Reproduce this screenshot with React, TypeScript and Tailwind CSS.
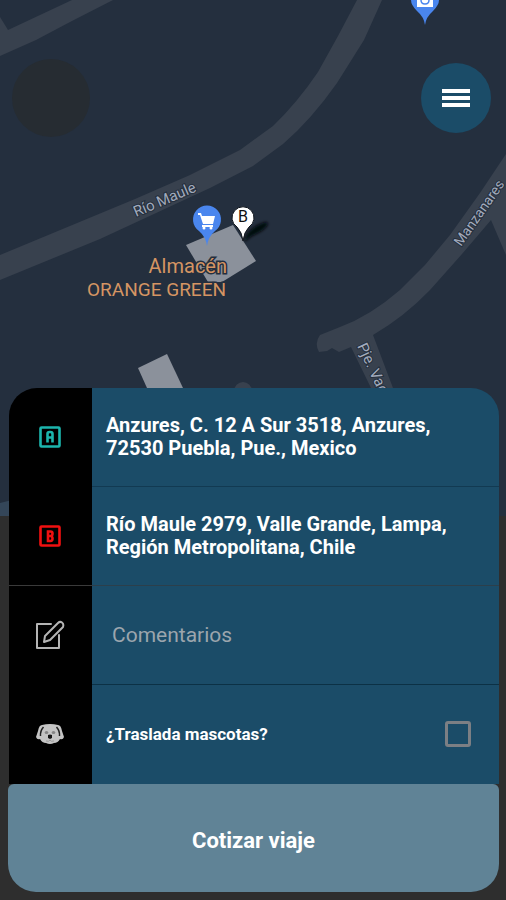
import type { ReactNode } from 'react';

function MapBackground() {
  return (
    <svg
      className="absolute left-0 top-0 h-[516px] w-full"
      viewBox="0 0 506 516"
      preserveAspectRatio="xMidYMin slice"
      fontFamily="Roboto, sans-serif"
      aria-hidden="true"
    >
      <defs>
        <filter id="soft" x="-30%" y="-30%" width="160%" height="160%">
          <feGaussianBlur stdDeviation="1.5" />
        </filter>
      </defs>
      <rect width="506" height="516" fill="#242f3e" />
      <g fill="#38414e">
        <path d="M0 17 8 30 72 0h41L70 22 36 40 0 56z" />
        <path d="M0 255 135 199 190 175 240 150 273 126Q297 103 318 72L338 36 357 0h25l-18 40-27 43q-26 37-54 61l-30 22-43 22L100 239 0 280z" />
        <path d="M506 154 480 193 450 235 425 265 400 290Q370 316 340 327L320 335Q314 343 319 352l8-1 5-3 7 4 12-5 20 41h22L373 335q31-18 57-45l32-36 29-34 15 35z" />
        <circle cx="243" cy="391" r="9" />
      </g>
      <g fill="#8b919b">
        <path d="m186 245 47-20 23 36-34 21h-14z" />
        <path d="m138 368 29-14 16 34h-36z" />
      </g>
      <path d="M0 503 12 500v16H0z" fill="#344659" />

      <g fill="#a2aabb" stroke="#242f3e" strokeWidth="2" paintOrder="stroke">
        <text fontSize="15" transform="translate(136 217) rotate(-23)">Río Maule</text>
        <text fontSize="14" transform="translate(461 247) rotate(-55)">Manzanares</text>
        <text fontSize="15" transform="translate(357 346) rotate(65)">Pje. Vac</text>
      </g>
      <g fontSize="20" fill="#d59563" stroke="#242f3e" strokeWidth="3" paintOrder="stroke" textAnchor="end">
        <text x="227" y="273">Almacén</text>
        <text x="226" y="296" fontSize="19">ORANGE GREEN</text>
      </g>

      <path d="M244 242q2-12 16-18 8-4 8 0-2 6-16 12z" fill="#05080c" filter="url(#soft)" />
      <path d="M207 246q-1-9-8-15a14 14 0 1 1 16 0q-7 6-8 15z" fill="#4a86ee" />
      <path d="M198 213h3l1 3h13l-2 8h-10l-3-9h-2zM202 225h11v2h-11z" fill="#fff" />
      <circle cx="204" cy="228" r="1.5" fill="#fff" />
      <circle cx="211" cy="228" r="1.5" fill="#fff" />
      <path d="M243 241q-1-9-6-14a11 11 0 1 1 12 0q-5 5-6 14z" fill="#fff" stroke="#10151c" />
      <text x="243" y="222" fontSize="16" textAnchor="middle" fill="#111">B</text>

      <path d="M425 25q-1-8-8-14-6-6-6-11h28q0 5-6 11-7 6-8 14z" fill="#4a86ee" />
      <path d="M417 0h16v7h-16z" fill="#fff" />
      <path d="M421 0q0 4 4 4t4-4" fill="none" stroke="#4a86ee" strokeWidth="1.5" />
    </svg>
  );
}

function LetterIcon({ letter, className }: { letter: 'A' | 'B'; className: string }) {
  return (
    <svg viewBox="0 0 24 24" className={`size-6 ${className}`} fill="none" stroke="currentColor" aria-hidden="true">
      <rect x="2.5" y="2.5" width="19" height="19" rx="1" strokeWidth="2.6" />
      {letter === 'A' ? (
        <path d="M9.500 17.500V9q0-2 2-2h1q2 0 2 2v8.500M9.500 12.500h5" strokeWidth="2.6" />
      ) : (
        <path d="M10 7.500h2.500q2 0 2 2 0 2.500-2 2.500H10h2.500q2 0 2 2.500t-2 2.500H10z" strokeWidth="2.6" />
      )}
    </svg>
  );
}

function EditIcon() {
  return (
    <svg viewBox="0 0 30 30" className="size-[30px] text-[#b4b4b4]" fill="none" stroke="currentColor" strokeWidth="2" strokeLinejoin="round" strokeLinecap="round" aria-hidden="true">
      <path d="M16 4H2v24h22V15" />
      <path d="m9 22 1-6L23 3q2-2 4-.5T28 7L15 20z" />
    </svg>
  );
}

function DogIcon() {
  return (
    <svg viewBox="0 0 28 22" className="h-[22px] w-7" aria-hidden="true">
      <path d="M6 2Q14 0 22 2q3 0 4 6l2 6q-1 3-4 2-2 4-6 4-4 2-8 0-4 0-6-4-3 1-4-2l2-6Q3 2 6 2z" fill="#c4c4c4" />
      <path d="M7.500 4Q4 8 4.500 13M20.500 4q3.500 4 3 9" fill="none" stroke="#222" strokeWidth="1.500" />
      <ellipse cx="10.500" cy="9.500" rx="1.800" ry="1.500" fill="#858585" />
      <ellipse cx="17.500" cy="9.500" rx="1.800" ry="1.500" fill="#858585" />
      <path d="M12 12q2-1 4 0v3l-2 1-2-1z" fill="#151515" />
      <path d="M10 18q3 1 4-1 1 2 4 1" fill="none" stroke="#999" />
    </svg>
  );
}

function Row({ icon, children, iconLine = 'border-black', line }: { icon: ReactNode; children: ReactNode; iconLine?: string; line: string }) {
  return (
    <div className="flex min-h-[99px]">
      <div className={`flex w-[83px] shrink-0 items-center justify-center border-b bg-black pr-0.5 ${iconLine}`}>{icon}</div>
      <div className={`flex min-w-0 flex-1 items-center border-b bg-[#1b4c68] px-3.5 ${line}`}>{children}</div>
    </div>
  );
}

export default function App() {
  return (
    <main className="relative flex min-h-screen flex-col justify-between bg-[#2e2e2e] font-[Roboto,sans-serif] text-white">
      <MapBackground />

      <header className="relative flex items-center justify-between px-3 pt-[59px]">
        <div className="size-[78px] rounded-full bg-[#262c32]" />
        <button type="button" aria-label="Menú" className="mr-[3px] flex size-[70px] flex-col items-center justify-center gap-[3px] rounded-full bg-[#1b4c68]">
          <span className="h-1 w-7 bg-white" />
          <span className="h-1 w-7 bg-white" />
          <span className="h-1 w-7 bg-white" />
        </button>
      </header>

      <form className="relative mr-[7px] mb-2 ml-[9px]" onSubmit={(e) => e.preventDefault()}>
        <div className="overflow-hidden rounded-t-[28px]">
          <Row icon={<LetterIcon letter="A" className="text-[#1cb5ad]" />} line="border-[#123a52]">
            <p className="text-[20px] leading-[23px] font-bold">
              Anzures, C. 12 A Sur 3518, Anzures, 72530 Puebla, Pue., Mexico
            </p>
          </Row>
          <Row icon={<LetterIcon letter="B" className="text-[#f01010]" />} iconLine="border-[#3a3a3a]" line="border-[#2c3f4b]">
            <p className="text-[20px] leading-[23px] font-bold">
              Río Maule 2979, Valle Grande, Lampa, Región Metropolitana, Chile
            </p>
          </Row>
          <Row icon={<EditIcon />} line="border-[#0c3145]">
            <input
              type="text"
              aria-label="Comentarios"
              placeholder="Comentarios"
              className="h-12 w-full bg-transparent px-1.5 text-[21px] outline-none placeholder:text-[#9ba5ad]"
            />
          </Row>
          <Row icon={<DogIcon />} line="border-[#1b4c68]">
            <label htmlFor="pets" className="flex-1 text-[17px] leading-[23px] font-bold">
              ¿Traslada mascotas?
            </label>
            <input
              id="pets"
              type="checkbox"
              className="mr-3.5 size-[26px] appearance-none rounded-[3px] border-[3px] border-[#7c7f84] checked:bg-[#7c7f84]"
            />
          </Row>
        </div>
        <button type="submit" className="-ml-px flex h-[108px] w-[calc(100%+1px)] items-center justify-center rounded-t-md rounded-b-[28px] bg-[#608396] pt-1 text-[22px] font-bold">
          Cotizar viaje
        </button>
      </form>
    </main>
  );
}
